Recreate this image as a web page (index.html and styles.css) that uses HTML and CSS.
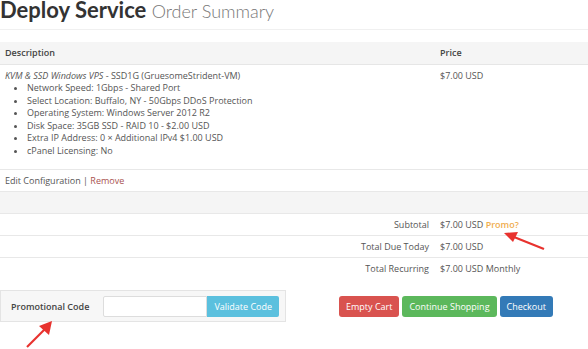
FILE: index.html
```html
<!DOCTYPE html>
<html lang="en">
<head>
    <meta charset="UTF-8"/>
    <title>Order Summary</title>
    <link rel="stylesheet" href="styles.css">
</head>
<body>

<div class="page">
    <div class="page-header">
        <h1>Deploy Service <small>Order Summary</small></h1>
    </div>

    <table class="cart">
        <thead>
        <tr>
            <th class="desc">Description</th>
            <th class="price">Price</th>
        </tr>
        </thead>
        <tbody>
        <tr class="item">
            <td>
                <em>KVM &amp; SSD Windows VPS</em> - SSD1G (GruesomeStrident-VM)
                <ul>
                    <li>Network Speed: 1Gbps - Shared Port</li>
                    <li>Select Location: Buffalo, NY - 50Gbps DDoS Protection</li>
                    <li>Operating System: Windows Server 2012 R2</li>
                    <li>Disk Space: 35GB SSD - RAID 10 - $2.00 USD</li>
                    <li>Extra IP Address: 0 × Additional IPv4 $1.00 USD</li>
                    <li>cPanel Licensing: No</li>
                </ul>
            </td>
            <td>$7.00 USD</td>
        </tr>
        <tr>
            <td colspan="2"><a href="#" class="edit">Edit Configuration</a> | <a href="#" class="remove">Remove</a></td>
        </tr>
        <tr class="spacer">
            <td colspan="2"></td>
        </tr>
        <tr class="total">
            <td class="label">Subtotal</td>
            <td>$7.00 USD <a href="#" class="promo">Promo?</a></td>
        </tr>
        <tr class="total">
            <td class="label">Total Due Today</td>
            <td>$7.00 USD</td>
        </tr>
        <tr class="total last">
            <td class="label">Total Recurring</td>
            <td>$7.00 USD Monthly</td>
        </tr>
        </tbody>
    </table>

    <div class="actions">
        <div class="promo-box">
            <span class="promo-label">Promotional Code</span>
            <input type="text" class="promo-input"/>
            <button class="btn btn-info">Validate Code</button>
        </div>
        <div class="buttons">
            <button class="btn btn-danger">Empty Cart</button>
            <button class="btn btn-success">Continue Shopping</button>
            <button class="btn btn-primary">Checkout</button>
        </div>
    </div>
</div>

<!-- annotation arrows drawn over the screenshot -->
<svg class="arrow arrow-promo" width="50" height="24" viewBox="0 0 50 24">
    <path d="M44 20 L14 8" stroke="#e8322e" stroke-width="2.2" fill="none"/>
    <path d="M4 4 L18 3 L13 13 Z" fill="#e8322e"/>
</svg>
<svg class="arrow arrow-code" width="34" height="32" viewBox="0 0 34 32">
    <path d="M3 29 L22 10" stroke="#e8322e" stroke-width="2.2" fill="none"/>
    <path d="M28 3 L25 17 L15 8 Z" fill="#e8322e"/>
</svg>

</body>
</html>
```

FILE: styles.css
```css
* {
    box-sizing: border-box;
}

body {
    margin: 0;
    font-family: "Open Sans", Arial, sans-serif;
    font-size: 9px;
    color: #555;
    background: #fff;
    overflow: hidden;
}

.page {
    width: 588px;
}

.page-header {
    height: 30px;
    border-bottom: 1px solid #f0f0f0;
    margin-bottom: 12px;
    overflow: hidden;
}

.page-header h1 {
    margin: 0;
    font-family: Lato, "Open Sans", sans-serif;
    font-size: 22px;
    font-weight: 700;
    color: #333;
    line-height: 20px;
}

.page-header small {
    font-size: 18px;
    font-weight: 300;
    color: #777;
}

.cart {
    width: 100%;
    border-collapse: collapse;
}

.cart th {
    background: #f5f5f5;
    font-weight: 600;
    color: #444;
    text-align: left;
    height: 22px;
    padding: 0 5px;
    border-bottom: 1px solid #e6e6e6;
}

.cart th.price, .cart td + td {
    width: 153px;
}

.cart td {
    padding: 0 5px;
    height: 22px;
    border-bottom: 1px solid #e8e8e8;
    vertical-align: middle;
}

.cart .item td {
    vertical-align: top;
    padding-top: 5px;
    height: 105px;
    line-height: 12.5px;
}

.cart ul {
    margin: 0;
    padding-left: 22px;
}

.cart a {
    text-decoration: none;
}

.edit {
    color: #555;
}

.remove {
    color: #a9524f;
}

.spacer td {
    background: #f5f5f5;
}

.total .label {
    text-align: right;
    padding-right: 6px;
}

.total.last td {
    border-bottom: none;
}

.promo {
    color: #f0ad4e;
    font-weight: 600;
}

.actions {
    display: flex;
    align-items: center;
    margin-top: 11px;
}

.promo-box {
    display: flex;
    align-items: center;
    width: 286px;
    height: 32px;
    background: #f7f7f7;
    border: 1px solid #e4e4e4;
    padding: 0 6px 0 10px;
}

.promo-label {
    font-weight: 600;
    color: #444;
    width: 93px;
}

.promo-input {
    width: 104px;
    height: 21px;
    border: 1px solid #ddd;
    border-radius: 2px 0 0 2px;
    background: #fff;
}

.btn {
    font-family: "Open Sans", Arial, sans-serif;
    font-size: 9px;
    color: #fff;
    border: none;
    border-radius: 3px;
    height: 21px;
    padding: 0 7px;
    white-space: nowrap;
}

.promo-box .btn {
    border-radius: 0 2px 2px 0;
    width: 72px;
    padding: 0;
}

.buttons {
    display: flex;
    gap: 3px;
    margin-left: 53px;
}

.btn-info {
    background: #5bc0de;
}

.btn-danger {
    background: #d9534f;
}

.btn-success {
    background: #5cb85c;
}

.btn-primary {
    background: #337ab7;
}

.arrow {
    position: absolute;
}

.arrow-promo {
    left: 500px;
    top: 229px;
}

.arrow-code {
    left: 24px;
    top: 318px;
}
```
